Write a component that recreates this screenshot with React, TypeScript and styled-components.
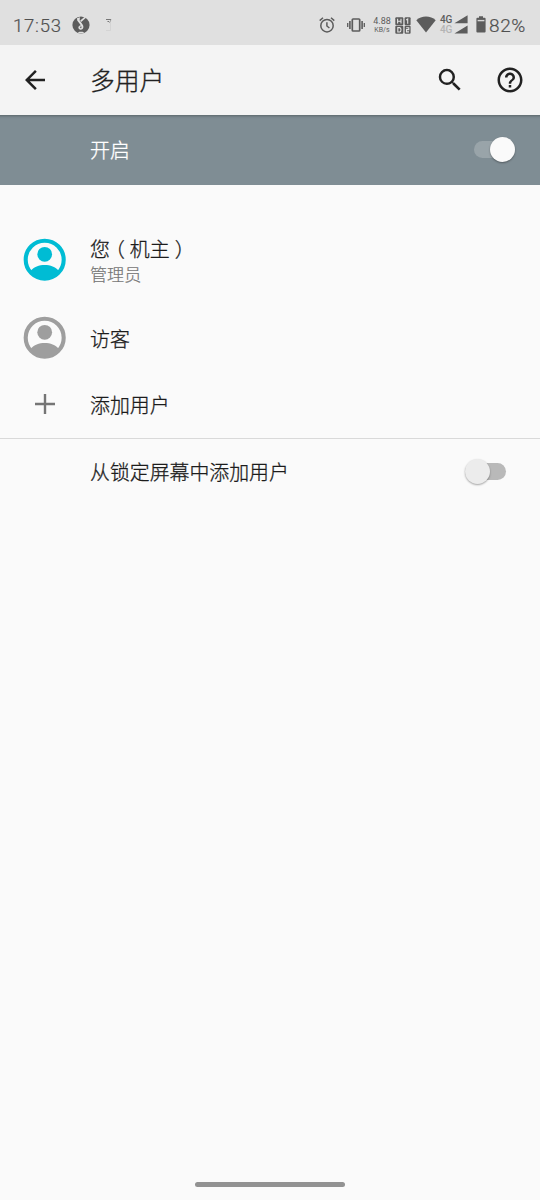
import { ReactNode, useState } from 'react';
import { MdArrowBack, MdHelpOutline, MdSearch } from 'react-icons/md';
import styled, { createGlobalStyle } from 'styled-components';

const ink = '#5c5c5c';

const App = () => {
  const [enabled, setEnabled] = useState(true);
  const [fromLock, setFromLock] = useState(false);
  return (
    <Screen>
      <GlobalStyle />
      <StatusBar />
      <AppBar>
        <IconButton aria-label="返回"><MdArrowBack size={30} /></IconButton>
        <Title>多用户</Title>
        <IconButton aria-label="搜索"><MdSearch size={30} /></IconButton>
        <IconButton aria-label="帮助"><MdHelpOutline size={30} /></IconButton>
      </AppBar>
      <MasterBar>
        <Label $color="#ffffff">开启</Label>
        <Switch tone="bar" on={enabled} onToggle={() => setEnabled(!enabled)} />
      </MasterBar>
      <List>
        <UserRow
          height={78}
          icon={<Avatar color="#00bcd4" />}
          label={<>您<Paren>（</Paren>机主<Paren>）</Paren></>}
          detail="管理员"
        />
        <UserRow height={78} icon={<Avatar color="#9e9e9e" />} label="访客" />
        <UserRow height={54} icon={<Plus />} label="添加用户" />
      </List>
      <LockRow>
        <Label>从锁定屏幕中添加用户</Label>
        <Switch tone="page" on={fromLock} onToggle={() => setFromLock(!fromLock)} />
      </LockRow>
      <NavArea><NavPill /></NavArea>
    </Screen>
  );
};

export default App;

interface UserRowProps {
    height : number,
    icon : ReactNode,
    label : ReactNode,
    detail? : string
}

const UserRow = ({ height, icon, label, detail } : UserRowProps) => (
  <Row $height={height}>
    <Leading>{icon}</Leading>
    <div>
      <Label>{label}</Label>
      {detail && <Detail>{detail}</Detail>}
    </div>
  </Row>
);

interface SwitchProps {
    tone : 'bar' | 'page',
    on : boolean,
    onToggle : () => void
}

const Switch = ({ tone, on, onToggle } : SwitchProps) => (
  <Track type="button" role="switch" aria-checked={on} $tone={tone} $on={on} onClick={onToggle}>
    <Thumb $on={on} />
  </Track>
);

const Avatar = ({ color } : { color : string }) => (
  <svg width="42" height="42" viewBox="0.3 0.3 42 42" overflow="visible">
    <circle cx="21" cy="21" r="19" fill="none" stroke={color} strokeWidth="4.1" />
    <circle cx="21" cy="15.6" r="7.4" fill={color} />
    <path d="M7 32C10 28.2 15.5 26.2 21 26.2S32 28.2 35 32C32 37 27 40 21 40S10 37 7 32Z" fill={color} />
  </svg>
);

const Plus = () => (
  <svg width="42" height="42" viewBox="0 0 42 42">
    <path d="M11 21H31M21 11V31" stroke="#757575" strokeWidth="2.4" />
  </svg>
);

const StatusBar = () => (
  <Status>
    <Clock>17:53</Clock>
    <Globe />
    <Fragment />
    <Spacer />
    <Alarm />
    <Vibrate />
    <Speed>
      <span>4.88</span>
      <small>KB/s</small>
    </Speed>
    <HdBadge />
    <Wifi />
    <Network>
      <span>4G</span>
      <Faded>4G</Faded>
    </Network>
    <Signal />
    <Battery />
    <Percent>82%</Percent>
  </Status>
);

const Globe = () => (
  <Glyph $left={11} width="18" height="18" viewBox="0 0 18 18">
    <circle cx="9" cy="9" r="8.6" fill={ink} />
    <path d="M5 2.2L8 1.2L7.6 4.2L10.6 8.6C12.4 11.4 11 14 8.6 13.8C6 13.4 5.8 10.6 7.4 9.8L8.8 9.2L5.2 4.4Z" fill="#e0e0e0" />
    <path d="M9.2 6L14.2 1.4L12.4 1L8.2 4.6Z" fill="#e0e0e0" />
    <path d="M7.6 10.8L9.8 10.4L9 12.6Z" fill={ink} />
    <path d="M5.5 16.6Q9 18 12.5 16.6L10.5 15.8H7.5Z" fill="#e0e0e0" />
  </Glyph>
);

const Fragment = () => (
  <Glyph $left={15} width="8" height="14" viewBox="0 0 8 14">
    <path d="M1 1.5H6M2.5 3.5H4" stroke="#777" strokeWidth="1" />
    <path d="M6 1.5L4.5 5" stroke="#999" strokeWidth="0.9" />
    <path d="M5.5 5V12.5H1" fill="none" stroke="#cfcfcf" strokeWidth="0.7" />
  </Glyph>
);

const Alarm = () => (
  <Glyph width="16" height="16" viewBox="0 0 16 16" fill="none" stroke={ink} strokeWidth="1.5">
    <circle cx="8" cy="8.7" r="6.2" />
    <path d="M7.9 5.2V9L10.4 11M0.7 3.6L4 0.8M15.3 3.6L12 0.8" />
  </Glyph>
);

const Vibrate = () => (
  <Glyph $left={12} width="18" height="14" viewBox="0 0 18 14" fill="none" stroke={ink}>
    <rect x="5.3" y="1" width="7.4" height="12" rx="0.8" strokeWidth="1.7" />
    <path d="M2.9 3V11M15.1 3V11" strokeWidth="1.6" />
    <path d="M0.7 5V9M17.3 5V9" strokeWidth="1.3" />
  </Glyph>
);

const HdBadge = () => (
  <Glyph $left={4} width="16" height="17" viewBox="0 0 16 17">
    <g fill={ink}>
      <rect x="0.3" y="0.2" width="8" height="8" rx="1" />
      <rect x="0.3" y="8.8" width="8" height="8" rx="1" />
      <rect x="9.6" y="0.2" width="6" height="8" rx="1" />
      <rect x="9.6" y="8.8" width="6" height="8" rx="1" />
    </g>
    <g fill="none" stroke="#e4e4e4" strokeWidth="1.1">
      <path d="M2.6 1.8V6.6M6 1.8V6.6M2.6 4.2H6" />
      <path d="M2.8 10.6H4.6Q6 10.6 6 12.8T4.6 15H2.8Z" />
      <path d="M11.2 3L12.7 2V6.8" />
      <path d="M11.2 10.7H13.8V12.6H11.5V14.9H14" />
    </g>
  </Glyph>
);

const Wifi = () => (
  <Glyph $left={5} width="20" height="18" viewBox="0 0 20 18">
    <path d="M0.3 4.2C3 1.8 6.2 0.6 10 0.6S17 1.8 19.7 4.2L10 16.6Z" fill={ink} />
  </Glyph>
);

const Signal = () => (
  <Glyph $left={1} width="14" height="20" viewBox="0 0 14 20">
    <path d="M0.4 8.2L13.6 0.2V8.2ZM0.4 18.4L13.6 10.4V18.4Z" fill={ink} />
  </Glyph>
);

const Battery = () => (
  <Glyph $left={8} width="10" height="18" viewBox="0 0 10 18">
    <path d="M3 0.3H7V1.8H8.6Q9.6 1.8 9.6 2.8V15.4Q9.6 16.4 8.6 16.4H1.4Q0.4 16.4 0.4 15.4V2.8Q0.4 1.8 1.4 1.8H3Z" fill={ink} />
    <path d="M1.6 4.6H8.4" stroke="#d6d6d6" strokeWidth="1.4" />
  </Glyph>
);

const GlobalStyle = createGlobalStyle`
    body {
        margin: 0;
        background-color: #fafafa;
        font-family: Roboto, 'Noto Sans CJK SC', sans-serif;
    }

    * {
        box-sizing: border-box;
    }
`;

const Screen = styled.div`
    width: 540px;
    height: 1200px;
    display: flex;
    flex-direction: column;
    background-color: #fafafa;
    overflow: hidden;
`;

const Status = styled.div`
    height: 45px;
    flex: none;
    display: flex;
    align-items: center;
    padding: 5px 13px 0 13px;
    background-color: #e0e0e0;
    color: ${ink};
`;

const Glyph = styled.svg<{$left? : number}>`
    flex: none;
    margin-left: ${p => p.$left ?? 0}px;
`;

const Spacer = styled.div`
    flex: 1;
`;

const Clock = styled.div`
    width: 48px;
    padding-top: 1px;
    font-size: 18.5px;
    font-weight: 300;
    letter-spacing: 0.8px;
    white-space: nowrap;
    color: #505050;
    -webkit-text-stroke: 0.2px;
`;

const Percent = styled.div`
    width: 38px;
    margin-left: 3px;
    font-size: 19px;
    font-weight: 300;
    letter-spacing: 0.6px;
    white-space: nowrap;
    color: #505050;
    -webkit-text-stroke: 0.2px;
`;

const Speed = styled.div`
    width: 18px;
    margin-left: 8px;
    display: flex;
    flex-direction: column;
    align-items: center;
    font-size: 9px;
    line-height: 9px;

    small {
        font-size: 7px;
        line-height: 8px;
    }
`;

const Network = styled.div`
    width: 13px;
    margin-left: 4px;
    display: flex;
    flex-direction: column;
    font-size: 10px;
    font-weight: 500;
    line-height: 9.5px;
    letter-spacing: -0.2px;
    margin-top: -1px;
`;

const Faded = styled.span`
    color: #b4b4b4;
`;

const AppBar = styled.header`
    height: 70px;
    flex: none;
    display: flex;
    align-items: center;
    gap: 30px;
    padding: 0 15px 0 20px;
    background-color: #f4f4f4;
    color: #212121;
`;

const IconButton = styled.button`
    width: 30px;
    height: 30px;
    padding: 0;
    border: 0;
    background: none;
    color: inherit;

    svg {
        display: block;
    }
`;

const Title = styled.h1`
    flex: 1;
    margin: 0 0 0 10px;
    padding-top: 3px;
    font-size: 24.8px;
    font-weight: 300;
    line-height: 36px;
    -webkit-text-stroke: 0.3px;
`;

const MasterBar = styled.div`
    height: 70px;
    flex: none;
    display: flex;
    align-items: center;
    justify-content: space-between;
    padding: 0 25px 1px 90px;
    background-color: #7f8d94;
    box-shadow: inset 0 4px 3px -3px rgba(0,0,0,0.3);
`;

const Label = styled.div<{$color? : string}>`
    padding-top: 5px;
    color: ${p => p.$color ?? '#1c1c1c'};
    font-size: 19.9px;
    font-weight: 300;
    line-height: 26px;
    -webkit-text-stroke: 0.3px;
`;

const Paren = styled.span`
    margin: 0 5px;
    font-feature-settings: 'halt';
`;

const Detail = styled.div`
    color: #757575;
    font-size: 17.1px;
    font-weight: 300;
    line-height: 22px;
    margin-bottom: 2px;
    -webkit-text-stroke: 0.2px;
`;

const List = styled.div`
    height: 254px;
    flex: none;
    padding-top: 36px;
    border-bottom: 1px solid #d9d9d9;
`;

const Row = styled.div<{$height : number}>`
    height: ${p => p.$height}px;
    display: flex;
    align-items: center;
`;

const Leading = styled.div`
    width: 66px;
    margin-left: 24px;

    svg {
        display: block;
    }
`;

const LockRow = styled.div`
    height: 64px;
    display: flex;
    align-items: center;
    justify-content: space-between;
    padding: 0 34px 0 90px;
`;

const Track = styled.button<{$tone : 'bar' | 'page', $on : boolean}>`
    width: 41px;
    height: 17px;
    padding: 0;
    border: 0;
    border-radius: 9px;
    display: flex;
    align-items: center;
    justify-content: ${p => p.$on ? 'flex-end' : 'flex-start'};
    background-color: ${p => p.$tone === 'bar' ? '#99a4a9' : '#b9b9b9'};
`;

const Thumb = styled.span<{$on : boolean}>`
    width: 25px;
    height: 25px;
    flex: none;
    border-radius: 50%;
    background-color: ${p => p.$on ? '#fafafa' : '#ececec'};
    box-shadow: 0 1px 2px rgba(0,0,0,0.35);
`;

const NavArea = styled.div`
    flex: 1;
    display: flex;
    align-items: flex-end;
    justify-content: center;
    padding-bottom: 13px;
`;

const NavPill = styled.div`
    width: 150px;
    height: 5px;
    border-radius: 3px;
    background-color: #929292;
`;
